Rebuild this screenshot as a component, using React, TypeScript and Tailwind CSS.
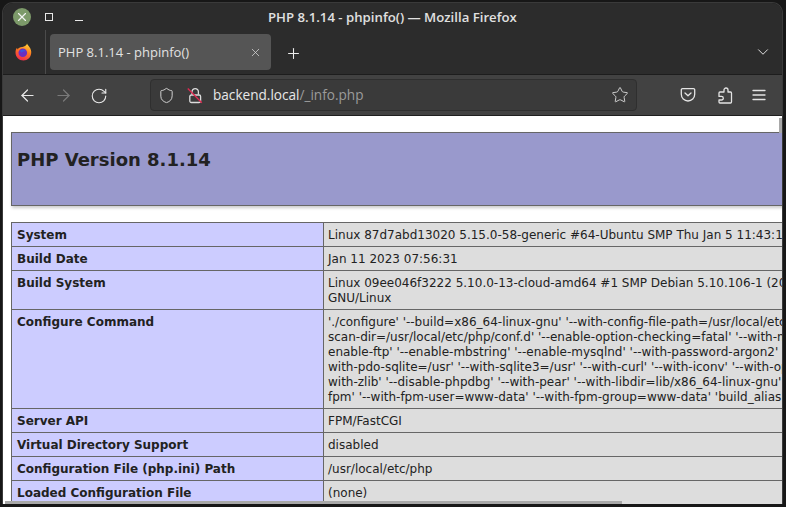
import { ArrowLeft, ArrowRight, ChevronDown, Plus, RotateCw, Shield, Star, X } from 'lucide-react';

type Row = { label: string; lines: string[] };

const rows: Row[] = [
  { label: 'System', lines: ['Linux 87d7abd13020 5.15.0-58-generic #64-Ubuntu SMP Thu Jan 5 11:43:13 UTC 2023 x86_64'] },
  { label: 'Build Date', lines: ['Jan 11 2023 07:56:31'] },
  {
    label: 'Build System',
    lines: ['Linux 09ee046f3222 5.10.0-13-cloud-amd64 #1 SMP Debian 5.10.106-1 (2022-03-17) x86_64', 'GNU/Linux'],
  },
  {
    label: 'Configure Command',
    lines: [
      "'./configure' '--build=x86_64-linux-gnu' '--with-config-file-path=/usr/local/etc/php' '--with-config-file-",
      "scan-dir=/usr/local/etc/php/conf.d' '--enable-option-checking=fatal' '--with-mhash' '--with-pic' '--",
      "enable-ftp' '--enable-mbstring' '--enable-mysqlnd' '--with-password-argon2' '--with-sodium=shared' '--",
      "with-pdo-sqlite=/usr' '--with-sqlite3=/usr' '--with-curl' '--with-iconv' '--with-openssl' '--with-readline' '--",
      "with-zlib' '--disable-phpdbg' '--with-pear' '--with-libdir=lib/x86_64-linux-gnu' '--disable-cgi' '--enable-",
      "fpm' '--with-fpm-user=www-data' '--with-fpm-group=www-data' 'build_alias=x86_64-linux-gnu'",
    ],
  },
  { label: 'Server API', lines: ['FPM/FastCGI'] },
  { label: 'Virtual Directory Support', lines: ['disabled'] },
  { label: 'Configuration File (php.ini) Path', lines: ['/usr/local/etc/php'] },
  { label: 'Loaded Configuration File', lines: ['(none)'] },
];

function FirefoxLogo() {
  return (
    <svg width="17" height="18" viewBox="0 0 17 18">
      <defs>
        <linearGradient id="ff" x1="0.7" y1="0" x2="0.3" y2="1">
          <stop offset="0" stopColor="#ffd23a" />
          <stop offset="0.45" stopColor="#ff7a1f" />
          <stop offset="1" stopColor="#f0254f" />
        </linearGradient>
      </defs>
      <path d="M12 0.5c0.6 1.6 1.4 2 2.4 3.4C15.900 6 16.500 8 16.200 10.300 15.700 14.500 12.500 17.500 8.500 17.500 4 17.500 0.500 14 0.500 9.500 0.500 7.500 1 6 2 4.800L2.600 6.500C3.300 5 5.500 3.800 7.500 4 9.500 3.300 11.800 2.500 12 0.500Z" fill="url(#ff)" />
      <circle cx="7.800" cy="9.800" r="4.300" fill="#6b2fc0" />
      <path d="M5 7.500C7 6 10 6.500 11 8.500 9.500 8 7.500 8.500 7 9.500 6 9.500 5.300 8.500 5 7.500Z" fill="#3a57e0" />
    </svg>
  );
}

function PocketIcon() {
  return (
    <svg width="16" height="16" viewBox="0 0 16 16" fill="none" stroke="#e4e4e4" strokeWidth="1.300" strokeLinecap="round" strokeLinejoin="round">
      <path d="M2.500 1.700h11a1.200 1.200 0 0 1 1.200 1.200v4.400a6.700 6.700 0 0 1-13.400 0V2.900a1.200 1.200 0 0 1 1.200-1.200Z" />
      <path d="M5 6l3 2.800L11 6" />
    </svg>
  );
}

function PuzzleIcon() {
  return (
    <svg width="16" height="17" viewBox="0 0 16 17" fill="none" stroke="#e4e4e4" strokeWidth="1.300" strokeLinejoin="round">
      <path d="M7 5V3a2 2 0 0 1 4 0V5H13.500a1 1 0 0 1 1 1V15a1 1 0 0 1-1 1H3a1 1 0 0 1-1-1V13H4.500a1.800 1.800 0 0 0 0-3.600H2V6a1 1 0 0 1 1-1Z" />
    </svg>
  );
}

function LockOffIcon() {
  return (
    <svg width="16" height="17" viewBox="0 0 16 17" fill="none">
      <path d="M5 7.500V4.800a3.200 3.200 0 0 1 6.400 0V7.500" stroke="#dcdcdc" strokeWidth="1.300" />
      <rect x="2.800" y="8" width="10.800" height="7.500" rx="1.500" stroke="#dcdcdc" strokeWidth="1.300" />
      <path d="M0.800 1.500L14.800 15.700" stroke="#e22850" strokeWidth="1.300" />
    </svg>
  );
}

function MenuIcon() {
  return (
    <svg width="14" height="12" viewBox="0 0 14 12" stroke="#e4e4e4" strokeWidth="1.300" strokeLinecap="round">
      <path d="M1 1.500H13M1 6H13M1 10.500H13" />
    </svg>
  );
}

export default function App() {
  return (
    <div className="h-[507px] w-[786px] overflow-hidden bg-[#171717] pl-[2px] pr-[3px] pt-[2px] pb-[3px] font-['Liberation_Sans',sans-serif]">
      <div className="flex h-full flex-col overflow-hidden rounded-t-[11px] border border-b-0 border-[#3a3a3a]">
        <div className="flex h-[26px] shrink-0 items-center bg-[#2c2c2c] pt-[2px]">
          <div className="ml-[10px] flex h-[18px] w-[18px] shrink-0 items-center justify-center rounded-full bg-[#7d9a6a]">
            <X size={14} strokeWidth={2} color="#f2f2f2" />
          </div>
          <div className="ml-[14px] h-[8px] w-[8px] border border-[#e8e8e8]" />
          <div className="ml-[22px] mt-[7px] h-px w-[8px] bg-[#e8e8e8]" />
          <div className="ml-[185px] mt-[1px] font-['Open_Sans',sans-serif] text-[13.2px] font-semibold whitespace-nowrap text-[#e0e0e0]">
            PHP 8.1.14 - phpinfo() — Mozilla Firefox
          </div>
        </div>

        <div className="flex h-[46px] shrink-0 items-center border-b border-[#1d1d1d] bg-[#2c2c2c]">
          <div className="ml-[12px] flex w-[17px] justify-center">
            <FirefoxLogo />
          </div>
          <div className="ml-[13px] h-[44px] w-px bg-[#4b4b4b]" />
          <div className="ml-[4px] flex h-[36px] w-[221px] items-center rounded-[4px] bg-[#555555] pl-[8px] pr-[9px]">
            <span className="mt-[2px] flex-1 font-['Open_Sans',sans-serif] text-[13px] whitespace-nowrap text-[#e2e2e2]">PHP 8.1.14 - phpinfo()</span>
            <X className="mt-[1px]" size={13} strokeWidth={1.400} color="#d8d8d8" />
          </div>
          <Plus className="ml-[14px] mt-[3px]" size={17} strokeWidth={1.500} color="#ececec" />
          <ChevronDown className="ml-auto mr-[10px]" size={18} strokeWidth={1.300} color="#e4e4e4" />
        </div>

        <div className="flex h-[41px] shrink-0 items-center border-b border-[#1f1f1f] bg-[#424242]">
          <ArrowLeft className="ml-[15px] mt-[1px]" size={19} strokeWidth={1.500} color="#e8e8e8" />
          <ArrowRight className="ml-[17px] mt-[1px]" size={19} strokeWidth={1.500} color="#7a7a7a" />
          <RotateCw className="ml-[17px] mt-[1px]" size={18} strokeWidth={1.500} color="#e8e8e8" />
          <div className="ml-[42px] flex h-[32px] w-[487px] items-center rounded-[4px] border border-[#2f2f2f] bg-[#3a3a3a] pl-[7px] pr-[7px]">
            <Shield className="mt-[1px]" size={17} strokeWidth={1.300} color="#dedede" />
            <div className="ml-[12px] flex">
              <LockOffIcon />
            </div>
            <span className="ml-[10px] mt-[1px] font-['Open_Sans',sans-serif] text-[13.6px] whitespace-nowrap text-[#e8e8e8]">
              backend.local<span className="text-[#9a9a9a]">/_info.php</span>
            </span>
            <Star className="ml-auto" size={18} strokeWidth={1.200} color="#dedede" />
          </div>
          <div className="ml-[43px]">
            <PocketIcon />
          </div>
          <div className="ml-[21px]">
            <PuzzleIcon />
          </div>
          <div className="ml-[19px]">
            <MenuIcon />
          </div>
        </div>

        <div className="relative min-h-0 flex-1 overflow-hidden bg-white pl-[8px] pt-[16px] font-['DejaVu_Sans',sans-serif] text-[#222222]">
          <div className="flex h-[74px] w-[934px] border border-[#666666] bg-[#9999cc] pl-[5px] pt-[15px] shadow-[1px_2px_3px_#cccccc]">
            <h1 className="text-[18px] leading-[24px] font-bold">PHP Version 8.1.14</h1>
          </div>
          <table className="mt-[16px] w-[934px] table-fixed border-collapse text-[12px] leading-[15px]">
            <colgroup>
              <col className="w-[312px]" />
              <col />
            </colgroup>
            <tbody>
              {rows.map((row) => (
                <tr key={row.label}>
                  <td className="border border-[#666666] bg-[#ccccff] px-[5px] pt-[5px] pb-[3px] align-top font-bold whitespace-nowrap">{row.label}</td>
                  <td className="border border-[#666666] bg-[#dddddd] px-[4px] pt-[5px] pb-[3px] align-top whitespace-nowrap">
                    {row.lines.map((line) => (
                      <div key={line}>{line}</div>
                    ))}
                  </td>
                </tr>
              ))}
            </tbody>
          </table>
          <div className="absolute right-0 top-[2px] h-[15px] w-[3px] bg-[#a8a8a8]" />
          <div className="absolute bottom-0 left-[2px] h-[3px] w-[617px] bg-[#a8a8a8]" />
        </div>
      </div>
    </div>
  );
}
